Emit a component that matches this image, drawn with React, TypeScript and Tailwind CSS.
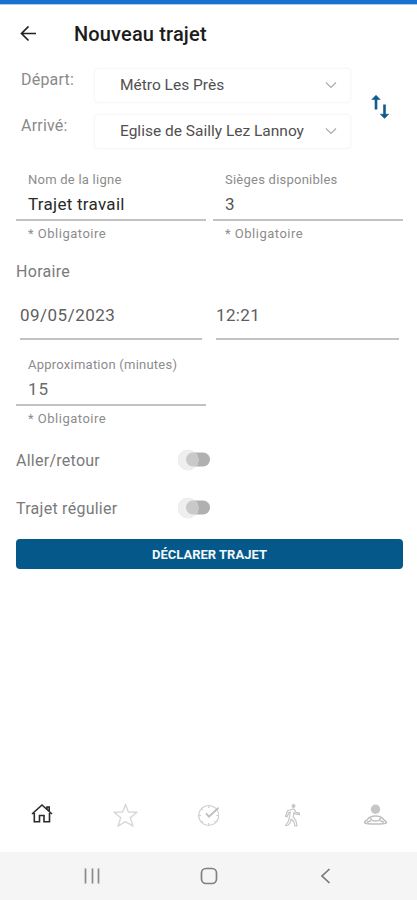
import React from 'react';

function Select({ value }: { value: string }) {
  return (
    <button className="flex h-[35px] w-[257px] items-center justify-between rounded border border-[#f8f8f8] bg-white pl-[25px] pr-[13px] text-[#505050] shadow-[0_0_2px_#f4f4f4]">
      <span className="text-[15.5px]">{value}</span>
      <svg className="h-3 w-3" viewBox="0 0 12 12" fill="none" stroke="#acacac" strokeWidth="1.2">
        <path d="M1 2.5 6 7.5 11 2.5" />
      </svg>
    </button>
  );
}

function Field({ label, value, valueClass }: { label: string; value: string; valueClass: string }) {
  return (
    <div className="w-[190px]">
      <div className="h-[51px] border-b-2 border-[#c2c2c2] pl-3">
        <div className="h-5 text-[13px] leading-5 tracking-[0.24px] text-[#8c8c8c]">{label}</div>
        <div className={`h-7 text-[17px] leading-7 ${valueClass}`}>{value}</div>
      </div>
      <div className="h-6 pl-3 text-[13px] leading-[26px] tracking-[0.5px] text-[#8c8c8c]">* Obligatoire</div>
    </div>
  );
}

function Toggle({ label }: { label: string }) {
  return (
    <div className="flex h-12 items-center text-[#7a7a7a]">
      <span className="w-[162px] pt-px text-[16px] tracking-[0.26px]">{label}</span>
      <svg className="h-6 w-9" viewBox="0 0 36 24">
        <rect x="8" y="4.5" width="24" height="14" rx="7" fill="#b0b0b0" />
        <circle cx="10" cy="12" r="10.5" fill="#efefef" />
        <path d="M15 4.5a7 7 0 0 0 0 14h3.300a10.500 10.500 0 0 0 0-13.200l-.6-.8z" fill="#c9c9c9" />
      </svg>
    </div>
  );
}

function BottomNav() {
  return (
    <nav className="flex h-[74px] items-center gap-[59px] pl-[30px]">
      <svg className="h-6 w-6" viewBox="0 0 24 24" fill="none" stroke="#2a2a2a" strokeWidth="1.6">
        <path d="M2 11 12 2l10 9M17 6V4h2.200v4M4.300 10v8.800h5.200v-6.300h4.500v6.300h5.500V10" />
      </svg>
      <svg className="h-[26px] w-[26px]" viewBox="0 0 26 26" fill="none" stroke="#d8d8d8" strokeWidth="1.4" strokeLinejoin="round">
        <path d="m12.500 2.500 2.800 7.500 8.700.2-6.700 5.400 2.700 8.600-7.500-4.500-7.500 4.500 2.700-8.600L1 10.200l8.700-.2z" />
      </svg>
      <svg className="h-6 w-6" viewBox="0 0 24 24" fill="none" stroke="#d0d0d0" strokeWidth="1.2">
        <circle cx="10.700" cy="12.500" r="10" />
        <path d="M10.700 2.500V5M10.700 20v2.500M.700 12.500h2.500M18.200 12.500h2.500M3.700 5.500l1.300 1.300M3.700 19.500l1.300-1.300M17.700 19.500l-1.300-1.300" />
        <path d="m8 10.300 3 3.400 9.500-9" stroke="#c0c0c0" strokeWidth="1.9" />
      </svg>
      <svg className="h-6 w-6" viewBox="1 0 24 24" fill="none" stroke="#c6c6c6" strokeWidth="1.2" strokeLinejoin="round">
        <circle cx="13.500" cy="3" r="2" fill="#c6c6c6" stroke="none" />
        <path d="M12.500 6.200 7.500 7.800 5.500 13.500l1.500.5 1.800-4.500 1.500-.5-1 6-1 3.500L5.500 22.500h2.300l2.500-3.200 1-3.300 2.700 3 .8 3.800h2.200l-1-5-2.800-4 .7-4.500 1.200 1.500 4.300.8v-1.500l-3.400-.7-1.800-3.200z" />
      </svg>
      <svg className="h-6 w-6" viewBox="1 0 24 24" fill="none" stroke="#c0c0c0" strokeWidth="1.5" strokeLinejoin="round">
        <circle cx="12.500" cy="6.300" r="4.700" fill="#c6c6c6" stroke="none" />
        <path d="M1.500 19.800c0-2 2-1.800 3-3.500 1.500-2.300 4-3.300 8-3.300s6.500 1 8 3.300c1 1.700 3 1.500 3 3.500-2 1.600-20 1.600-22 0z" />
        <path d="M7.500 14.500c.3 4.800 9.700 4.800 10 0M4 19.200l4-1.500M21 19.200l-4-1.500" />
      </svg>
    </nav>
  );
}

function SystemBar() {
  return (
    <div className="flex h-12 items-center justify-around bg-[#f5f5f5] px-[33px]">
      <svg className="h-6 w-6" viewBox="0 0 24 24" stroke="#8a8a8a" strokeWidth="1.7">
        <path d="M5.500 4.500v15M12.500 4.500v15M18.500 4.500v15" />
      </svg>
      <svg className="h-6 w-6" viewBox="0 0 24 24" fill="none" stroke="#808080" strokeWidth="1.7">
        <rect x="4.500" y="4.500" width="15" height="15" rx="4.500" />
      </svg>
      <svg className="h-6 w-6" viewBox="0 0 24 24" fill="none" stroke="#777" strokeWidth="1.7">
        <path d="M15.500 5 8 12l7.500 7" />
      </svg>
    </div>
  );
}

function App() {
  return (
    <div className="flex h-[900px] w-[417px] flex-col overflow-hidden bg-white font-['Roboto',sans-serif]">
      <div className="h-[5px] border-b border-[#a9cdf0] bg-[#1772d0]" />

      <header className="flex h-[58px] items-center pl-5">
        <svg className="h-4 w-4" viewBox="0 0 16 16" fill="none" stroke="#222" strokeWidth="1.7">
          <path d="M16 7.500H1.500M8.500.500 1.500 7.500l7 7" />
        </svg>
        <h1 className="pl-[38px] text-[20px] font-medium tracking-[0.15px] text-[#1c1c1c]">Nouveau trajet</h1>
      </header>

      <section className="flex pt-[4px]">
        <div className="w-[94px] pl-[21px] text-[16px] leading-[26px] tracking-[0.2px] text-[#8a8a8a]">
          <div className="h-[46px]">Départ:</div>
          <div>Arrivé:</div>
        </div>
        <div className="flex flex-col gap-[11px] pt-px">
          <Select value="Métro Les Près" />
          <Select value="Eglise de Sailly Lez Lannoy" />
        </div>
        <div className="flex flex-1 items-start pl-5 pt-[26px]">
          <svg className="h-7 w-5" viewBox="0 0 20 28" fill="none" stroke="#0d5c8e" strokeWidth="2.6">
            <path d="M5 16.500V4M13.500 11.500V24" />
            <path d="M.800 6.500 5 2.300l4.200 4.200zM9.300 21.200l4.200 4.200 4.200-4.200z" fill="#0d5c8e" strokeWidth=".6" />
          </svg>
        </div>
      </section>

      <section className="flex gap-[7px] pl-4 pt-[21px]">
        <Field label="Nom de la ligne" value="Trajet travail" valueClass="tracking-[0.28px] text-[#2a2a2a]" />
        <Field label="Sièges disponibles" value="3" valueClass="text-[#555]" />
      </section>

      <h2 className="mt-[15px] h-6 pl-4 text-[16px] leading-6 tracking-[0.3px] text-[#7a7a7a]">Horaire</h2>
      <div className="flex h-[56px] gap-[14px] pl-5 text-[17px] leading-[63px] text-[#5e5e5e]">
        <div className="w-[182px] border-b-2 border-[#c2c2c2] tracking-[0.48px]">09/05/2023</div>
        <div className="w-[183px] border-b-2 border-[#c2c2c2] tracking-[0.35px]">12:21</div>
      </div>

      <section className="pl-4 pt-[15px]">
        <Field label="Approximation (minutes)" value="15" valueClass="tracking-[0.9px] text-[#6a6a6a]" />
        <div className="pt-[6px]">
          <Toggle label="Aller/retour" />
          <Toggle label="Trajet régulier" />
        </div>
        <button className="mt-[7px] h-[30px] w-[387px] rounded bg-[#04598a] pt-px text-[13px] font-bold text-[#f2f7fa]">
          DÉCLARER TRAJET
        </button>
      </section>

      <div className="mt-auto">
        <BottomNav />
        <SystemBar />
      </div>
    </div>
  );
}

export default App;
